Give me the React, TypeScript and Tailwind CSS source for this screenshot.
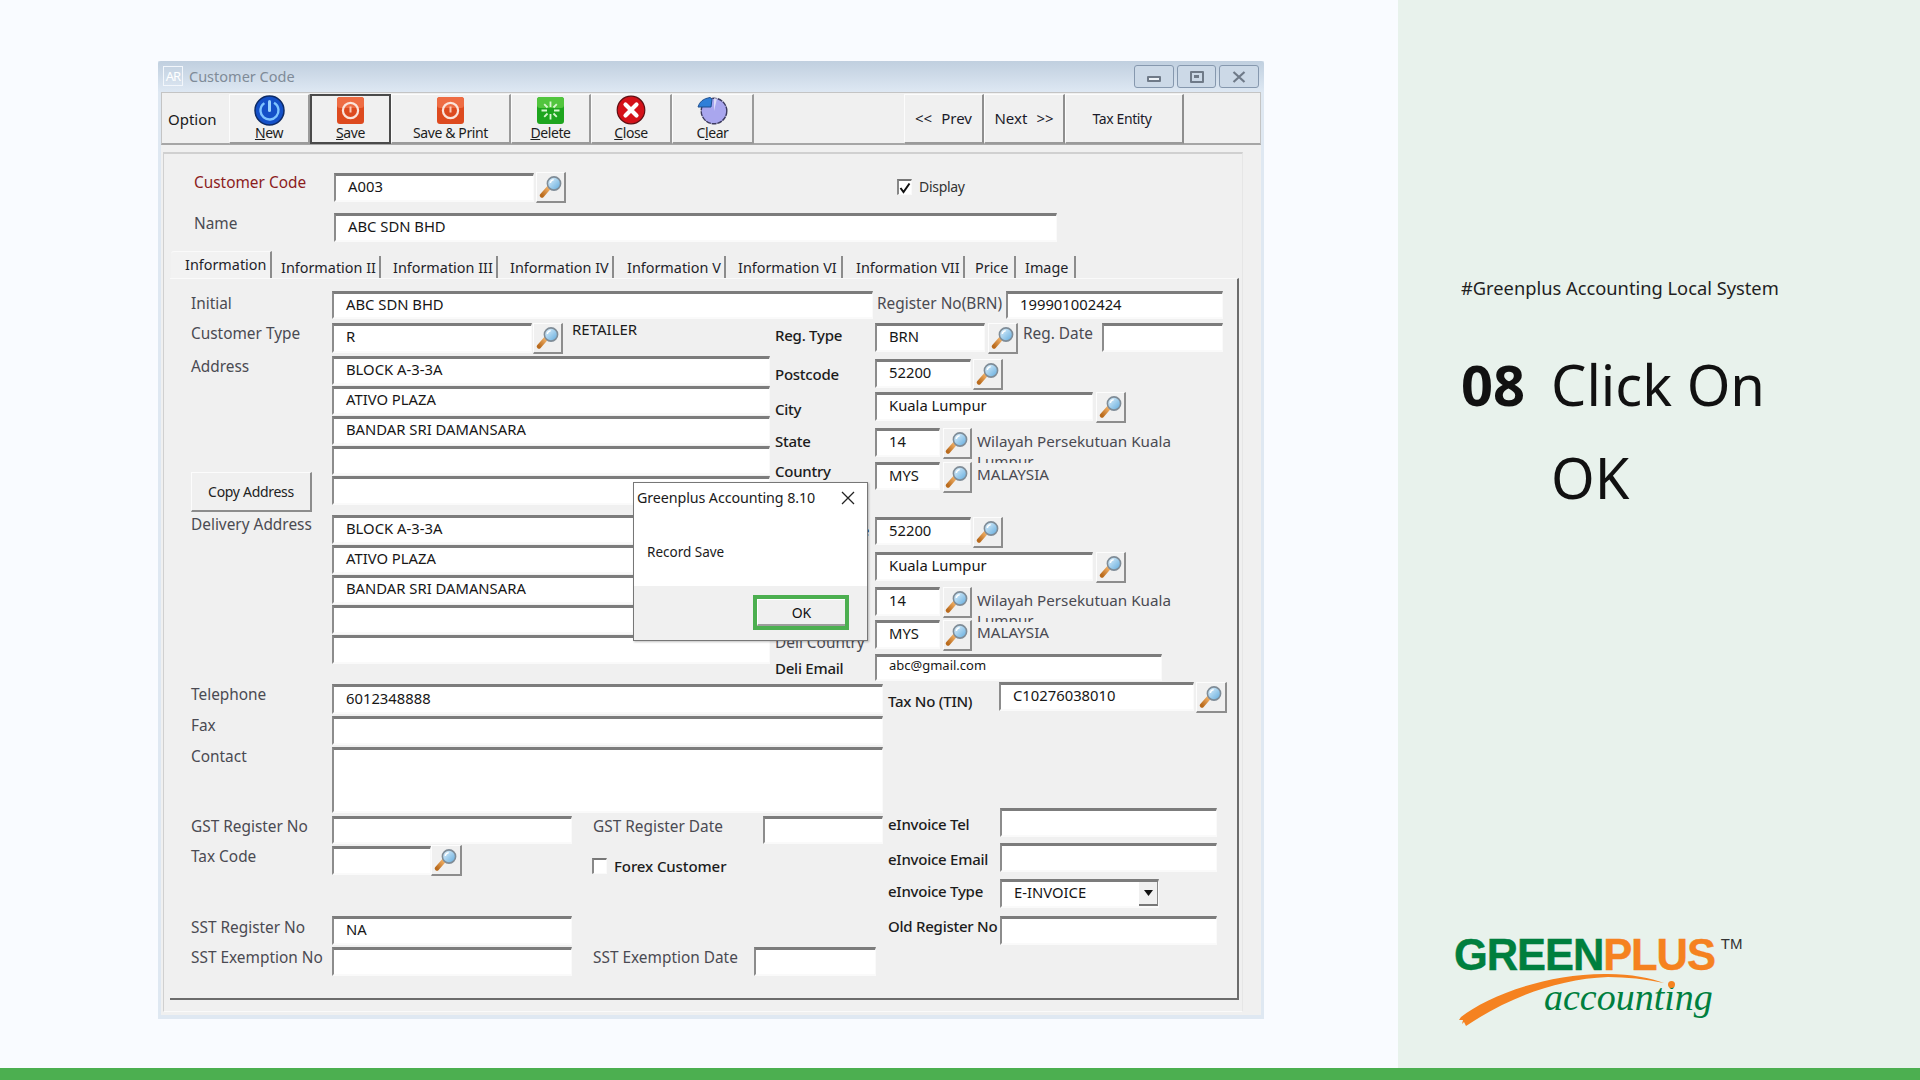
import type { ReactNode } from "react"

const FONT = "font-['Noto_Sans',sans-serif]"

function Field({ w, h = "h-[29px]", value = "", text = "text-[14.8px] leading-[20px]", className = "" }: { w: string; h?: string; value?: string; text?: string; className?: string }) {
  return (
    <div className={`${w} ${h} ${text} ${className} shrink-0 bg-white border-t-[3px] border-l-2 border-r border-b-2 border-t-[#7c7c7c] border-l-[#8c8c8c] border-r-[#fafafa] border-b-[#fafafa] pl-[12px] text-[#161616] whitespace-nowrap overflow-hidden`}>
      {value}
    </div>
  )
}

function Label({ w, pt = "", dark = false, children }: { w: string; pt?: string; dark?: boolean; children: ReactNode }) {
  return (
    <div className={`${w} ${pt} shrink-0 whitespace-nowrap ${dark ? "text-[15px] leading-[16px] tracking-[-0.25px] font-medium text-[#1c1c1c]" : "text-[15.4px] leading-[20px] text-[#4a4a52]"}`}>
      {children}
    </div>
  )
}

function Lens({ size = 24 }: { size?: number }) {
  return (
    <svg width={size} height={size} viewBox="0 0 24 24">
      <defs>
        <linearGradient id="lens" x1="0" y1="0" x2="1" y2="1">
          <stop offset="0" stopColor="#e8f6ff" />
          <stop offset="1" stopColor="#5ea9dc" />
        </linearGradient>
        <linearGradient id="grip" x1="0" y1="1" x2="1" y2="0">
          <stop offset="0" stopColor="#b96a1c" />
          <stop offset="1" stopColor="#f3b36a" />
        </linearGradient>
      </defs>
      <path d="M3 20.5 L10 12.5" stroke="url(#grip)" strokeWidth="4.4" strokeLinecap="round" />
      <circle cx="15" cy="8.5" r="6.6" fill="url(#lens)" stroke="#7f8c97" strokeWidth="1.6" />
      <path d="M11.3 8 a4 4 0 0 1 3.4 -3.4" stroke="#fff" strokeWidth="1.4" fill="none" />
    </svg>
  )
}

function Lookup({ w = "w-[30px]", h = "h-[31px]", className = "" }: { w?: string; h?: string; className?: string }) {
  return (
    <div className={`${w} ${h} ${className} shrink-0 flex items-center justify-center border-t border-l border-t-[#fdfdfd] border-l-[#fdfdfd] border-r-2 border-b-2 border-r-[#8d8d8d] border-b-[#8d8d8d] bg-[#f0f0f0]`}>
      <Lens />
    </div>
  )
}

function Check({ on = false }: { on?: boolean }) {
  return (
    <div className="w-[15px] h-[16px] shrink-0 bg-white border-t-2 border-l-2 border-t-[#777] border-l-[#888] border-r border-b border-r-[#fafafa] border-b-[#fafafa] flex items-center justify-center">
      {on && (
        <svg width="12" height="12" viewBox="0 0 12 12">
          <path d="M1.5 6 L4.5 10 L10.5 1.5" stroke="#111" strokeWidth="2" fill="none" />
        </svg>
      )}
    </div>
  )
}

function ToolBtn({ w, sunk = false, icon, children }: { w: string; sunk?: boolean; icon: ReactNode; children: ReactNode }) {
  return (
    <div className={`${w} h-[50px] shrink-0 flex flex-col items-center text-[14px] leading-[16px] tracking-[-0.4px] text-[#1d1d1d] ${sunk ? "border-2 border-[#4a4a4a]" : "border-l border-t border-l-[#fcfcfc] border-t-[#fcfcfc] border-r-2 border-b-2 border-r-[#9a9a9a] border-b-[#9a9a9a]"}`}>
      <div className={`${sunk ? "h-[29px]" : "h-[30px]"} flex items-center justify-center`}>{icon}</div>
      <div>{children}</div>
    </div>
  )
}

function NavBtn({ w, children }: { w: string; children: ReactNode }) {
  return (
    <div className={`${w} h-[50px] shrink-0 flex items-center justify-center gap-[9px] text-[15px] text-[#1a1a2a] border-l border-t border-l-[#fcfcfc] border-t-[#fcfcfc] border-r-2 border-b-2 border-r-[#8e8e8e] border-b-[#9a9a9a]`}>
      {children}
    </div>
  )
}

function PowerIcon() {
  return (
    <svg width="31" height="31" viewBox="0 0 31 31">
      <circle cx="15.5" cy="15.5" r="14.5" fill="#1450c8" stroke="#0c2a66" strokeWidth="1.5" />
      <circle cx="15.5" cy="15.5" r="9" fill="none" stroke="#7fc4ff" strokeWidth="2.4" strokeDasharray="46 11" strokeDashoffset="-5.5" transform="rotate(-90 15.5 15.5) rotate(-5 15.5 15.5)" />
      <path d="M15.5 6.5 V15.5" stroke="#9ad2ff" strokeWidth="3" strokeLinecap="round" />
    </svg>
  )
}

function SaveIcon() {
  return (
    <svg width="29" height="29" viewBox="0 0 29 29">
      <rect x="1" y="1" width="27" height="27" rx="3" fill="#dd4a1f" />
      <rect x="1" y="1" width="27" height="11" rx="3" fill="#ee6c43" />
      <circle cx="14.5" cy="14.5" r="7.6" fill="none" stroke="#fbe3da" strokeWidth="2.2" />
      <path d="M14.5 10.5 V16.5" stroke="#f8c9b7" strokeWidth="2" />
    </svg>
  )
}

function DeleteIcon() {
  return (
    <svg width="29" height="29" viewBox="0 0 29 29">
      <rect x="1" y="1" width="27" height="27" rx="3" fill="#1ea51e" />
      <rect x="1" y="1" width="27" height="11" rx="3" fill="#52c53e" />
      <path d="M14.5 5.5 V11 M14.5 18 V23.5 M5.5 14.5 H11 M18 14.5 H23.5 M8.2 8.2 L11.5 11.5 M17.5 17.5 L20.8 20.8 M20.8 8.2 L17.5 11.5 M11.5 17.5 L8.2 20.8" stroke="#d8f6d0" strokeWidth="1.8" />
    </svg>
  )
}

function CloseIcon() {
  return (
    <svg width="30" height="30" viewBox="0 0 30 30">
      <circle cx="15" cy="15" r="13.8" fill="#d4121a" stroke="#5e0e12" strokeWidth="1.2" />
      <path d="M9.5 9.5 L20.5 20.5 M20.5 9.5 L9.5 20.5" stroke="#fff" strokeWidth="4.2" strokeLinecap="round" />
    </svg>
  )
}

function ClearIcon() {
  return (
    <svg width="33" height="30" viewBox="0 0 33 30">
      <circle cx="18" cy="16" r="12.8" fill="#a9a6ee" stroke="#3c3a5e" strokeWidth="1.4" strokeDasharray="5 0.8" />
      <path d="M18 16 L18 3.2 A12.8 12.8 0 0 1 21 3.6 Z" fill="#dcdcf8" />
      <path d="M2 12 Q4 4 14 2.5 L16 4 L15 12 Z" fill="#2f7fd8" stroke="#1d4f90" strokeWidth="1" />
    </svg>
  )
}

function Logo() {
  return (
    <div className="relative w-[290px] h-[92px]">
      <div className="flex items-start">
        <span className="font-['Liberation_Sans',sans-serif] font-bold text-[43.5px] leading-[36px] tracking-[-1.1px] [-webkit-text-stroke:0.4px_currentColor] text-[#007f3e] whitespace-nowrap">
          GREEN<span className="text-[#f58220]">PLUS</span>
        </span>
        <span className="ml-[6px] font-['Liberation_Sans',sans-serif] text-[15px] leading-[14px] text-[#333]">TM</span>
      </div>
      <svg className="absolute left-[2px] top-0" width="290" height="92" viewBox="0 0 290 92">
        <path d="M5 80 C30 60 90 36 152 37 C175 37 195 41 208 46 C190 42 170 40 152 40 C100 42 50 62 10 89 L8 85 L6 87 L7 83 L3 83 Z" fill="#f58220" />
      </svg>
      <span className="absolute left-[90px] top-[39px] font-['Liberation_Serif',serif] italic text-[38px] leading-[42px] text-[#007f3e]">accounting</span>
      <span className="absolute left-[214px] top-[44px] w-[7px] h-[7px] rounded-full bg-[#f58220]" />
    </div>
  )
}

const addressLines = ["BLOCK A-3-3A", "ATIVO PLAZA", "BANDAR SRI DAMANSARA", "", ""]
const tabs = [
  { name: "Information", w: "w-[101px]", pl: "pl-[14px]" },
  { name: "Information II", w: "w-[109px]", pl: "pl-[9px]" },
  { name: "Information III", w: "w-[117px]", pl: "pl-[12px]" },
  { name: "Information IV", w: "w-[116px]", pl: "pl-[12px]" },
  { name: "Information V", w: "w-[112px]", pl: "pl-[13px]" },
  { name: "Information VI", w: "w-[117px]", pl: "pl-[12px]" },
  { name: "Information VII", w: "w-[122px]", pl: "pl-[13px]" },
  { name: "Price", w: "w-[51px]", pl: "pl-[10px]" },
  { name: "Image", w: "w-[60px]", pl: "pl-[9px]" },
]

export default function App() {
  return (
    <div className={`${FONT} w-[1920px] h-[1080px] flex flex-col overflow-hidden bg-[#f9fbff]`}>
      <div className="flex flex-1 min-h-0">
        <main className="w-[1398px] shrink-0 pl-[158px] pt-[61px]">
          {/* window */}
          <div className="relative w-[1106px] h-[958px] bg-[#dfe8f2] px-[3px] pb-[4px] flex flex-col">
            {/* title bar */}
            <div className="h-[31px] -mx-[3px] pl-[5px] pr-[5px] shrink-0 flex items-start bg-gradient-to-b from-[#c0cfdf] to-[#dee8f3] rounded-t-[3px]">
              <div className="mt-[5px] w-[20px] h-[20px] border border-[#f2f6fb] text-[13px] leading-[18px] text-center text-white tracking-[-1px]">AR</div>
              <div className="mt-[4px] ml-[6px] text-[14.5px] leading-[22px] text-[#7f8b98]">Customer Code</div>
              <div className="ml-auto mt-[4px] flex gap-[3px]">
                <div className="w-[40px] h-[23px] rounded-[3px] border border-[#8698ae] bg-[#ccd9e7] flex items-center justify-center">
                  <div className="mt-[4px] w-[14px] h-[6px] rounded-[1px] border-2 border-[#6f7a88] bg-[#eef3f8]" />
                </div>
                <div className="w-[39px] h-[23px] rounded-[3px] border border-[#8698ae] bg-[#ccd9e7] flex items-center justify-center">
                  <div className="w-[14px] h-[12px] rounded-[1px] border-2 border-[#6f7a88] flex items-center justify-center">
                    <div className="w-[5px] h-[3px] bg-[#6f7a88]" />
                  </div>
                </div>
                <div className="w-[40px] h-[23px] rounded-[3px] border border-[#8698ae] bg-[#ccd9e7] flex items-center justify-center">
                  <svg width="14" height="12" viewBox="0 0 14 12">
                    <path d="M1.5 1 L12.5 11 M12.5 1 L1.5 11" stroke="#6f7a88" strokeWidth="2.2" />
                  </svg>
                </div>
              </div>
            </div>

            <div className="flex-1 flex flex-col bg-[#f0f0f0]">
              {/* toolbar */}
              <div className="h-[53px] shrink-0 border border-[#c4c4c4] border-b-2 border-b-[#a6a6a6] pt-[1px] flex">
                <div className="w-[67px] shrink-0 pl-[6px] text-[15px] leading-[50px] text-[#1a1a1a]">Option</div>
                <ToolBtn w="w-[81px]" icon={<PowerIcon />}><u>N</u>ew</ToolBtn>
                <ToolBtn w="w-[81px]" sunk icon={<SaveIcon />}><u>S</u>ave</ToolBtn>
                <ToolBtn w="w-[120px]" icon={<SaveIcon />}>Save &amp; Print</ToolBtn>
                <ToolBtn w="w-[80px]" icon={<DeleteIcon />}><u>D</u>elete</ToolBtn>
                <ToolBtn w="w-[81px]" icon={<CloseIcon />}><u>C</u>lose</ToolBtn>
                <ToolBtn w="w-[82px]" icon={<ClearIcon />}>C<u>l</u>ear</ToolBtn>
                <div className="w-[150px] shrink-0" />
                <NavBtn w="w-[80px]"><span>&lt;&lt;</span><span>Prev</span></NavBtn>
                <NavBtn w="w-[81px]"><span>Next</span><span>&gt;&gt;</span></NavBtn>
                <NavBtn w="w-[119px]"><span className="pr-[4px] text-[14px] tracking-[-0.4px]">Tax Entity</span></NavBtn>
              </div>

              {/* form panel */}
              <div className="mt-[7px] ml-[2px] w-[1080px] h-[860px] shrink-0 border-t-2 border-l border-t-[#d0d0d0] border-l-[#d0d0d0] border-r border-r-[#e6e6e6] border-b border-b-[#fafafa]">
                <div className="mt-[18px] flex h-[31px]">
                  <Label w="ml-[30px] w-[140px]" pt="pt-[1px]"><span className="text-[#8c1c1c]">Customer Code</span></Label>
                  <Field w="w-[200px]" value="A003" className="mt-[1px]" />
                  <Lookup className="ml-[2px]" />
                  <div className="ml-[331px] mt-[7px] flex items-start">
                    <Check on />
                    <span className="ml-[7px] text-[14px] leading-[16px] tracking-[-0.3px] text-[#333]">Display</span>
                  </div>
                </div>
                <div className="mt-[10px] flex h-[29px]">
                  <Label w="ml-[30px] w-[140px]" pt="pt-[1px]"><span>Name</span></Label>
                  <Field w="w-[723px]" value="ABC SDN BHD" />
                </div>

                {/* tabs */}
                <div className="mt-[11px] ml-[7px] h-[25px] flex items-end">
                  {tabs.map((t, i) => (
                    <div key={t.name} className={`${t.w} ${t.pl} shrink-0 border-r-2 border-r-[#8c8c8c] text-[14.4px] text-[#1f1f2a] whitespace-nowrap ${i === 0 ? "h-[27px] leading-[26px] bg-[#f2f2f2] rounded-tl-[3px] border-t border-t-[#fafafa]" : "h-[22px] leading-[23px]"}`}>
                      {t.name}
                    </div>
                  ))}
                </div>

                {/* tab page */}
                <div className="ml-[6px] w-[1069px] h-[722px] border-t border-t-[#fafafa] border-r-2 border-b-2 border-r-[#6c6c6c] border-b-[#6c6c6c] pl-[21px] pt-[12px]">
                  <div className="flex h-[28px]">
                    <Label w="w-[141px]" pt="pt-[3px]">Initial</Label>
                    <Field w="w-[541px]" h="h-[28px]" value="ABC SDN BHD" />
                    <Label w="ml-[4px] w-[129px]" pt="pt-[3px]">Register No(BRN)</Label>
                    <Field w="w-[217px]" h="h-[28px]" value="199901002424" />
                  </div>

                  <div className="mt-[4px] flex h-[358px]">
                    {/* address column */}
                    <div className="w-[579px] shrink-0">
                      <div className="flex h-[33px]">
                        <Label w="w-[141px]" pt="pt-[1px]">Customer Type</Label>
                        <Field w="w-[200px]" h="h-[30px]" value="R" />
                        <Lookup className="ml-[1px]" />
                        <span className="ml-[9px] -mt-[3px] text-[15px] leading-[18px] text-[#1a1a1a]">RETAILER</span>
                      </div>
                      <div className="flex">
                        <div className="w-[141px] shrink-0">
                          <Label w="w-[141px]" pt="pt-[1px]">Address</Label>
                          <div className="mt-[95px] w-[121px] h-[40px] flex items-center justify-center text-[14px] tracking-[-0.3px] text-[#222] border-l border-t border-l-[#fcfcfc] border-t-[#fcfcfc] border-r-2 border-b-2 border-r-[#8c8c8c] border-b-[#8c8c8c]">Copy Address</div>
                          <Label w="w-[141px]" pt="pt-[3px]">Delivery Address</Label>
                        </div>
                        <div className="w-[438px] shrink-0">
                          {addressLines.map((v, i) => (
                            <Field key={i} w="w-[438px]" value={v} className="mb-[1px]" />
                          ))}
                          <div className="h-[9px]" />
                          {addressLines.map((v, i) => (
                            <Field key={i} w="w-[438px]" value={v} className="mb-[1px]" />
                          ))}
                        </div>
                      </div>
                    </div>

                    {/* region column */}
                    <div className="ml-[5px] shrink-0">
                      <div className="flex h-[30px]">
                        <Label w="w-[100px]" pt="pt-[4px]" dark>Reg. Type</Label>
                        <Field w="w-[110px]" value="BRN" />
                        <Lookup w="w-[30px]" className="ml-[3px]" />
                        <Label w="ml-[5px] w-[79px]" pt="pt-[1px]">Reg. Date</Label>
                        <Field w="w-[121px]" />
                      </div>
                      <div className="mt-[6px] flex h-[29px]">
                        <Label w="w-[100px]" pt="pt-[7px]" dark>Postcode</Label>
                        <Field w="w-[96px]" value="52200" />
                        <Lookup className="ml-[2px]" />
                      </div>
                      <div className="mt-[4px] flex h-[29px]">
                        <Label w="w-[100px]" pt="pt-[9px]" dark>City</Label>
                        <Field w="w-[218px]" value="Kuala Lumpur" />
                        <Lookup className="ml-[3px]" />
                      </div>
                      <div className="mt-[7px] flex h-[29px]">
                        <Label w="w-[100px]" pt="pt-[5px]" dark>State</Label>
                        <Field w="w-[65px]" value="14" />
                        <Lookup w="w-[29px]" className="ml-[3px]" />
                        <div className="ml-[5px] w-[205px] h-[35px] overflow-hidden text-[15.2px] leading-[20px] pt-[3px] text-[#4a4a52]">Wilayah Persekutuan Kuala Lumpur</div>
                      </div>
                      <div className="mt-[5px] flex h-[28px]">
                        <Label w="w-[100px]" pt="pt-[1px]" dark>Country</Label>
                        <Field w="w-[65px]" h="h-[28px]" value="MYS" />
                        <Lookup w="w-[29px]" className="ml-[3px]" />
                        <span className="ml-[5px] mt-[3px] text-[15.2px] leading-[18px] text-[#4a4a52]">MALAYSIA</span>
                      </div>
                      <div className="mt-[27px] flex h-[28px]">
                        <Label w="w-[100px]" pt="pt-[5px]" dark>Deli Postcode</Label>
                        <Field w="w-[96px]" h="h-[28px]" value="52200" />
                        <Lookup className="ml-[2px]" />
                      </div>
                      <div className="mt-[7px] flex h-[29px]">
                        <Label w="w-[100px]" pt="pt-[5px]" dark>Deli City</Label>
                        <Field w="w-[218px]" value="Kuala Lumpur" />
                        <Lookup className="ml-[3px]" />
                      </div>
                      <div className="mt-[6px] flex h-[29px]">
                        <Label w="w-[100px]" pt="pt-[5px]" dark>Deli State</Label>
                        <Field w="w-[65px]" value="14" />
                        <Lookup w="w-[29px]" className="ml-[3px]" />
                        <div className="ml-[5px] w-[205px] h-[35px] overflow-hidden text-[15.2px] leading-[20px] pt-[3px] text-[#4a4a52]">Wilayah Persekutuan Kuala Lumpur</div>
                      </div>
                      <div className="mt-[4px] flex h-[29px]">
                        <Label w="w-[100px]" pt="pt-[13px]">Deli Country</Label>
                        <Field w="w-[65px]" value="MYS" />
                        <Lookup w="w-[29px]" className="ml-[3px]" />
                        <span className="ml-[5px] mt-[3px] text-[15.2px] leading-[18px] text-[#4a4a52]">MALAYSIA</span>
                      </div>
                      <div className="mt-[5px] flex h-[27px]">
                        <Label w="w-[100px]" pt="pt-[6px]" dark>Deli Email</Label>
                        <Field w="w-[287px]" h="h-[27px]" value="abc@gmail.com" text="text-[13px] leading-[17px]" />
                      </div>
                    </div>
                  </div>

                  {/* lower half */}
                  <div className="mt-[1px] flex">
                    <div className="w-[692px] shrink-0">
                      <div className="mt-[2px] flex h-[30px]">
                        <Label w="w-[141px]" pt="pt-[1px]">Telephone</Label>
                        <Field w="w-[551px]" h="h-[30px]" value="6012348888" text="text-[14.8px] leading-[22px]" />
                      </div>
                      <div className="mt-[2px] flex h-[29px]">
                        <Label w="w-[141px]">Fax</Label>
                        <Field w="w-[551px]" />
                      </div>
                      <div className="mt-[2px] flex h-[66px]">
                        <Label w="w-[141px]">Contact</Label>
                        <Field w="w-[551px]" h="h-[66px]" />
                      </div>
                      <div className="mt-[3px] flex h-[28px]">
                        <Label w="w-[141px]" pt="pt-[1px]">GST Register No</Label>
                        <Field w="w-[240px]" h="h-[28px]" />
                        <Label w="ml-[21px] w-[170px]" pt="pt-[1px]">GST Register Date</Label>
                        <Field w="w-[120px]" h="h-[28px]" />
                      </div>
                      <div className="mt-[1px] flex h-[31px]">
                        <Label w="w-[141px]" pt="pt-[2px]">Tax Code</Label>
                        <Field w="w-[99px]" className="mt-[1px]" />
                        <Lookup w="w-[31px]" />
                        <div className="ml-[130px] mt-[13px] flex items-start">
                          <Check />
                          <span className="ml-[7px] -mt-[1px] text-[15px] leading-[18px] font-medium tracking-[-0.1px] text-[#1c1c1c]">Forex Customer</span>
                        </div>
                      </div>
                      <div className="mt-[40px] flex h-[29px]">
                        <Label w="w-[141px]" pt="pt-[2px]">SST Register No</Label>
                        <Field w="w-[240px]" value="NA" />
                      </div>
                      <div className="mt-[2px] flex h-[29px]">
                        <Label w="w-[141px]" pt="pt-[1px]">SST Exemption No</Label>
                        <Field w="w-[240px]" />
                        <Label w="ml-[21px] w-[161px]" pt="pt-[1px]">SST Exemption Date</Label>
                        <Field w="w-[122px]" />
                      </div>
                    </div>

                    <div className="ml-[5px] shrink-0">
                      <div className="flex h-[31px]">
                        <Label w="w-[111px]" pt="pt-[11px]" dark>Tax No (TIN)</Label>
                        <Field w="w-[195px]" value="C10276038010" />
                        <Lookup w="w-[31px]" className="ml-[2px]" />
                      </div>
                      <div className="mt-[95px] flex h-[29px]">
                        <Label w="w-[112px]" pt="pt-[8px]" dark>eInvoice Tel</Label>
                        <Field w="w-[217px]" />
                      </div>
                      <div className="mt-[6px] flex h-[29px]">
                        <Label w="w-[112px]" pt="pt-[8px]" dark>eInvoice Email</Label>
                        <Field w="w-[217px]" />
                      </div>
                      <div className="mt-[7px] flex h-[29px]">
                        <Label w="w-[112px]" pt="pt-[4px]" dark>eInvoice Type</Label>
                        <div className="relative">
                          <Field w="w-[159px]" value="E-INVOICE" />
                          <div className="absolute right-[1px] top-[3px] w-[19px] h-[24px] bg-[#f0f0f0] border-r border-b-2 border-r-[#888] border-b-[#777] flex items-center justify-center">
                            <svg width="9" height="6" viewBox="0 0 9 6"><path d="M0 0 H9 L4.5 6 Z" fill="#111" /></svg>
                          </div>
                        </div>
                      </div>
                      <div className="mt-[8px] flex h-[29px]">
                        <Label w="w-[112px]" pt="pt-[2px]" dark>Old Register No</Label>
                        <Field w="w-[217px]" />
                      </div>
                    </div>
                  </div>
                </div>
              </div>
            </div>

            {/* message box */}
            <div className="absolute left-[475px] top-[421px] w-[235px] h-[159px] bg-white border border-[#777] shadow-[1px_1px_2px_rgba(0,0,0,0.25)] flex flex-col">
              <div className="h-[28px] flex items-center pl-[3px] pr-[12px] pt-[2px] text-[14.3px] text-[#1a1a1a]">
                <span className="tracking-[-0.1px]">Greenplus Accounting 8.10</span>
                <svg className="ml-auto" width="14" height="14" viewBox="0 0 14 14"><path d="M1 1 L13 13 M13 1 L1 13" stroke="#222" strokeWidth="1.3" /></svg>
              </div>
              <div className="flex-1 pl-[13px] pt-[31px] text-[13.5px] leading-[20px] text-[#1a1a1a]">Record Save</div>
              <div className="h-[54px] bg-[#f0f0f0] pt-[9px] pl-[119px]">
                <div className="w-[96px] h-[35px] border-[4px] border-[#4caf50] bg-[#f0f0f0] flex items-center justify-center">
                  <div className="w-full h-full border-t border-l border-t-white border-l-white border-b-2 border-b-[#9c9c9c] text-center text-[14px] leading-[25px] text-[#111]">OK</div>
                </div>
              </div>
            </div>
          </div>
        </main>

        <aside className="flex-1 bg-[#e8f2ec] pl-[63px] pt-[274px] flex flex-col">
          <div className="text-[18.3px] leading-[28px] text-[#1f1f1f]">#Greenplus Accounting Local System</div>
          <div className="mt-[36px] flex text-[56px] leading-[93px] text-[#111]">
            <span className="w-[90px] shrink-0 font-bold">08</span>
            <span className="w-[260px]">Click On OK</span>
          </div>
          <div className="mt-auto mb-[39px] -ml-[7px]">
            <Logo />
          </div>
        </aside>
      </div>
      <div className="h-[12px] shrink-0 bg-[#4caf50]" />
    </div>
  )
}
